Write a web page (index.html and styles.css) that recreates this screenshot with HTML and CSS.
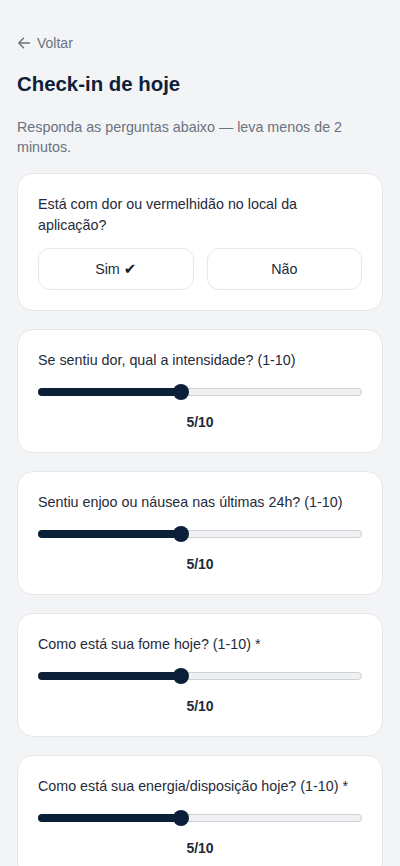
FILE: index.html
```html
<!DOCTYPE html>
<html lang="pt-BR">
<head>
<meta charset="utf-8">
<meta name="viewport" content="width=device-width, initial-scale=1">
<title>Check-in de hoje</title>
<link rel="stylesheet" href="styles.css">
</head>
<body>
<main class="page">
  <a class="back" href="#">
    <svg class="back-icon" viewBox="0 0 14 14" width="14" height="14" fill="none" stroke="currentColor" stroke-width="1.4" stroke-linecap="round" stroke-linejoin="round"><path d="M12.5 7H1.8M6.5 2.2L1.8 7l4.7 4.8"/></svg>
    <span>Voltar</span>
  </a>
  <h1 class="title">Check-in de hoje</h1>
  <p class="subtitle">Responda as perguntas abaixo — leva menos de 2 minutos.</p>

  <section class="card">
    <p class="question">Está com dor ou vermelhidão no local da aplicação?</p>
    <div class="choices">
      <button class="choice">Sim <span class="check">✔</span></button>
      <button class="choice">Não</button>
    </div>
  </section>

  <section class="card">
    <p class="question">Se sentiu dor, qual a intensidade? (1-10)</p>
    <div class="slider"><div class="track"><div class="fill" style="width:44.44%"><span class="thumb"></span></div></div></div>
    <p class="value">5/10</p>
  </section>

  <section class="card">
    <p class="question">Sentiu enjoo ou náusea nas últimas 24h? (1-10)</p>
    <div class="slider"><div class="track"><div class="fill" style="width:44.44%"><span class="thumb"></span></div></div></div>
    <p class="value">5/10</p>
  </section>

  <section class="card">
    <p class="question">Como está sua fome hoje? (1-10) *</p>
    <div class="slider"><div class="track"><div class="fill" style="width:44.44%"><span class="thumb"></span></div></div></div>
    <p class="value">5/10</p>
  </section>

  <section class="card">
    <p class="question">Como está sua energia/disposição hoje? (1-10) *</p>
    <div class="slider"><div class="track"><div class="fill" style="width:44.44%"><span class="thumb"></span></div></div></div>
    <p class="value">5/10</p>
  </section>
</main>
</body>
</html>
```

FILE: styles.css
```css
* { box-sizing: border-box; }
html, body { margin: 0; padding: 0; }
body {
  background: #f3f4f6;
  font-family: "Liberation Sans", Arial, Helvetica, sans-serif;
  color: #1f2937;
}
.page {
  padding: 33px 17px 40px;
  display: flex;
  flex-direction: column;
}
.back {
  display: flex;
  align-items: center;
  gap: 6px;
  color: #6b7280;
  text-decoration: none;
  font-size: 14px;
  line-height: 20px;
  height: 20px;
}
.back-icon { display: block; }
.title {
  margin: 17px 0 0;
  font-size: 20.4px;
  line-height: 28px;
  font-weight: 700;
  color: #0f2138;
}
.subtitle {
  margin: 19px 0 16px;
  font-size: 14.3px;
  line-height: 20px;
  color: #6b7280;
}
.card {
  background: #ffffff;
  border: 1px solid #e5e7eb;
  border-radius: 16px;
  padding: 20px;
  margin-bottom: 18px;
  display: flex;
  flex-direction: column;
}
.question {
  margin: 0;
  font-size: 14.3px;
  line-height: 21px;
  color: #1f2a3a;
}
.choices {
  margin-top: 12px;
  display: grid;
  grid-template-columns: 1fr 1fr;
  gap: 13px;
}
.choice {
  height: 42px;
  background: #ffffff;
  border: 1px solid #e5e7eb;
  border-radius: 12px;
  font-family: inherit;
  font-size: 14.3px;
  color: #1f2a3a;
  padding: 0;
}
.check {
  font-family: "DejaVu Sans", sans-serif;
  font-size: 15px;
  color: #0f1a2a;
}
.slider {
  margin-top: 13px;
  height: 16px;
  display: flex;
  align-items: center;
}
.track {
  position: relative;
  flex: 1;
  height: 8px;
  border-radius: 4px;
  background: #eef0f1;
  border: 1px solid #cdd1d6;
}
.fill {
  position: absolute;
  left: -1px;
  top: -1px;
  height: 8px;
  border-radius: 4px;
  background: #0b1f38;
}
.thumb {
  position: absolute;
  right: -8px;
  top: -4px;
  width: 16px;
  height: 16px;
  border-radius: 50%;
  background: #0b1f38;
}
.value {
  margin: 12px 0 0;
  text-align: center;
  font-size: 14px;
  line-height: 20px;
  font-weight: 700;
  color: #1f2a3a;
}
```
